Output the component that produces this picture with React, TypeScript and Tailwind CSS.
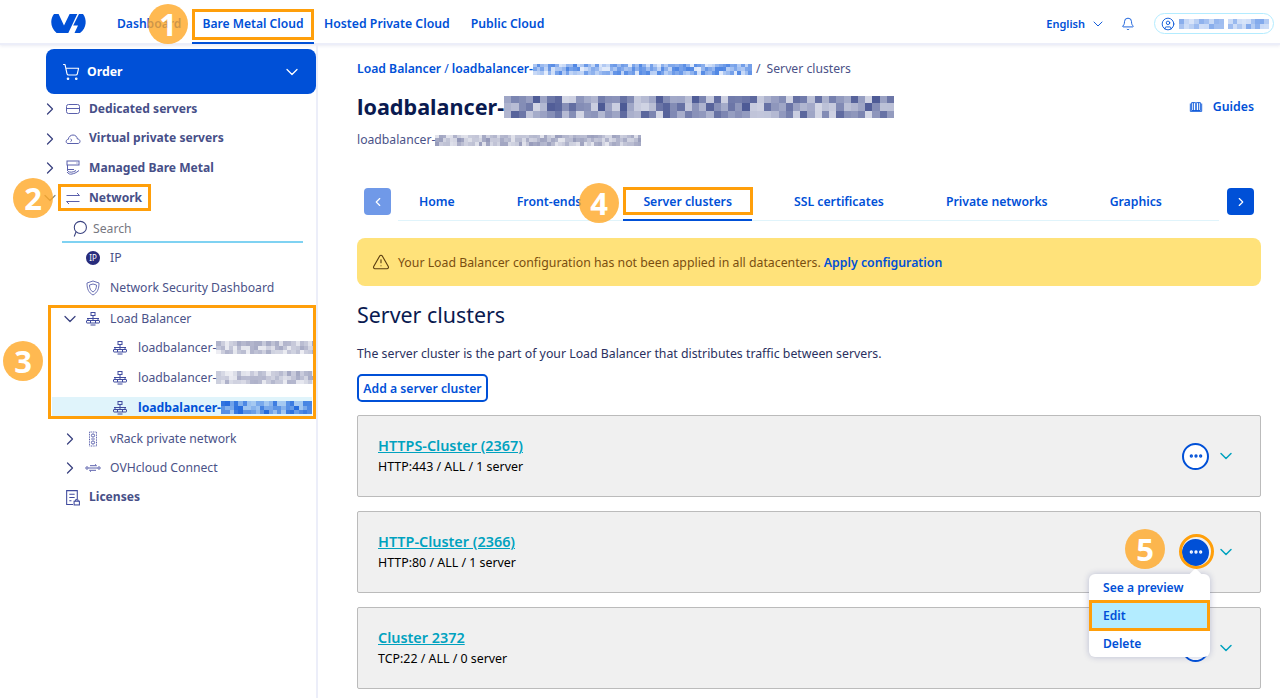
import React from "react";
import { ChevronDown, ChevronLeft, ChevronRight, Bell, ShoppingCart, TriangleAlert, Ellipsis, CircleUser } from "lucide-react";

function Pixels({ w, h, rows, seed, rgb, min = 0.2, max = 0.8 }: { w: number; h: number; rows: number; seed: number; rgb: string; min?: number; max?: number }) {
  const cell = h / rows;
  const cols = Math.ceil(w / cell);
  let s = seed;
  const next = () => {
    s = (s * 16807) % 2147483647;
    return (s % 1000) / 1000;
  };
  const cells: number[] = [];
  for (let i = 0; i < rows * cols; i++) cells.push(min + (max - min) * next());
  return (
    <span className="inline-grid shrink-0 overflow-hidden align-middle blur-[0.4px]" style={{ width: w, height: h, gridTemplateColumns: `repeat(${cols}, 1fr)`, gridTemplateRows: `repeat(${rows}, 1fr)` }}>
      {cells.map((o, i) => (
        <span key={i} style={{ backgroundColor: `rgba(${rgb},${o})` }} />
      ))}
    </span>
  );
}

function Logo() {
  return (
    <svg width="36" height="21" viewBox="0 0 36 21" fill="#0050d7" className="shrink-0">
      <path d="M3 1C-1 6-1 14.5 5.6 20L17.3 20 26.3 1 18.6 1 13 12.5 7.6 1Z" />
      <path d="M32 1C36 6 36 15 29 20L23.5 20 27 12.5 22.2 12.5 28 1Z" />
    </svg>
  );
}

function Sv({ children, s = 16, c = "#5a60ac" }: { children: React.ReactNode; s?: number; c?: string }) {
  return (
    <svg width={s} height={s} viewBox="0 0 16 16" fill="none" stroke={c} strokeWidth="1" className="shrink-0">
      {children}
    </svg>
  );
}

const LbIcon = () => (
  <Sv c="#3f4a9e">
    <rect x="6" y="1.5" width="4" height="3" />
    <path d="M8 4.5V7M2 7.5h12M3 7.5V9M8 7.5V9M13 7.5V9" />
    <rect x="1.5" y="9.5" width="13" height="2.5" rx="0.5" />
    <path d="M5.5 9.5v2.5M10.5 9.5v2.5M5.5 14h5" />
  </Sv>
);
const ServerIcon = () => (
  <Sv>
    <rect x="1.5" y="3.5" width="13" height="9" rx="2" />
    <path d="M1.5 7.5h13" />
  </Sv>
);
const CloudIcon = () => (
  <Sv>
    <path d="M4 12.5H3C1.5 12.5 1 11 1.2 10 1.5 8.8 2.5 8.3 3.3 8.4 3.6 5.5 6 4 8 4c2.4 0 4 1.6 4.4 4 1.5 0 2.6 1 2.6 2.4 0 1.2-1 2.1-2 2.1H4Z" />
    <path d="M5.5 8l1.5 1.3-1.5 1.3" />
  </Sv>
);
const MetalIcon = () => (
  <Sv>
    <rect x="2" y="1" width="12" height="4" />
    <path d="M2.5 5v6M2.5 9.5H9M11.5 3h1" />
    <path d="M2 12c1.5 2 3 2.5 5 2s4-1 7-3.5M3 11.5c2 1 5 1 8-1" />
  </Sv>
);
const NetIcon = () => (
  <Sv>
    <path d="M1.5 5.5h13M12 3l2.5 2.5M1.5 11.5h13M4 14l-2.5-2.5" />
  </Sv>
);
const RackIcon = () => (
  <Sv c="#5a60ac">
    <rect x="4.5" y="1" width="7" height="14" strokeDasharray="1 0.7" />
    <circle cx="8" cy="4.5" r="1.6" />
    <circle cx="8" cy="11.5" r="1.6" />
    <path d="M6.2 8h3.6" />
  </Sv>
);
const ConnectIcon = () => (
  <Sv>
    <circle cx="2" cy="8" r="1.2" />
    <circle cx="14" cy="8" r="1.2" />
    <path d="M3.5 8h9M5 5.7h6.5M10 4.3l1.5 1.4M11 10.3H4.5M6 11.7l-1.5-1.4" />
  </Sv>
);
const LicenseIcon = () => (
  <Sv s={17} c="#3f4a9e">
    <path d="M8.5 14.5H2.5v-13h10v8" />
    <path d="M5 5h5M5 8h5M5 11h2" />
    <rect x="9.5" y="11.5" width="5" height="3.5" />
    <path d="M10.5 11.5c0-2 3-2 3 0" />
  </Sv>
);
const SearchIcon = () => (
  <Sv s={17} c="#3a4280">
    <circle cx="8.8" cy="7" r="5.7" />
    <path d="M4.8 11 L3 15.5" />
  </Sv>
);
const ShieldIcon = () => (
  <Sv c="#6a70b4">
    <path d="M8 1 L14 3 C14 9 12.5 12.5 8 15 C3.5 12.5 2 9 2 3 Z" />
    <path d="M8 4 L11.5 5 C11.5 8.5 10.5 10.5 8 12 C5.5 10.5 4.5 8.5 4.5 5 Z" />
  </Sv>
);
const GuideIcon = () => (
  <Sv s={14} c="#0050d7">
    <path d="M1.5 4v9h13V4M3 3h4.2c.5 0 .8.3.8 1v8H3ZM13 3H8.8c-.5 0-.8.3-.8 1v8h5ZM5 3v9M11 3v9" />
  </Sv>
);
const IpIcon = () => (
  <span className="flex h-[14px] w-[14px] shrink-0 items-center justify-center rounded-full bg-[#282c7c] text-[8px] leading-none text-white">IP</span>
);

function Chev({ open = false, c = "#3a4280" }: { open?: boolean; c?: string }) {
  const Ico = open ? ChevronDown : ChevronRight;
  return (
    <span className="flex w-[14px] shrink-0 justify-center overflow-visible">
      <Ico size={20} strokeWidth={1.5} color={c} className="shrink-0" />
    </span>
  );
}

function TopRow({ label, icon, open = false }: { label: string; icon: React.ReactNode; open?: boolean }) {
  return (
    <div className="flex h-[29.7px] items-center pl-[43px]">
      <Chev open={open} c={open ? "#8a8a7a" : "#3a4280"} />
      <span className="ml-[7px] flex w-[17px] justify-center">{icon}</span>
      <span className="ml-[8px] text-[12.1px] font-bold text-[#474f88]">{label}</span>
    </div>
  );
}

function SubRow({ label, icon, chevron, open = false, h = "h-[30px]" }: { label: string; icon: React.ReactNode; chevron?: boolean; open?: boolean; h?: string }) {
  return (
    <div className={`flex items-center pl-[63px] ${h}`}>
      {chevron ? <Chev open={open} /> : <span className="w-[14px]" />}
      <span className="ml-[8px] flex w-[16px] justify-center">{icon}</span>
      <span className="ml-[9px] text-[12.2px] text-[#4a5288]">{label}</span>
    </div>
  );
}

function LbChild({ seed, active = false }: { seed: number; active?: boolean }) {
  return (
    <div className={`flex items-center overflow-hidden ${active ? "ml-[52px] mt-[4px] h-[22px] w-[260px] bg-[#e0f4fb] pl-[60px]" : "h-[30px] pl-[112px]"}`}>
      <LbIcon />
      <span className={`ml-[10px] whitespace-nowrap text-[12.2px] ${active ? "font-bold text-[#0050d7]" : "text-[#4a5288]"}`}>loadbalancer-</span>
      <Pixels w={active ? 95 : 100} h={13} rows={3} seed={seed} rgb={active ? "0,80,215" : "74,82,136"} min={active ? 0.25 : 0.1} max={active ? 0.85 : 0.5} />
    </div>
  );
}

function Sidebar() {
  return (
    <aside className="flex h-full w-[318px] shrink-0 flex-col border-r-2 border-[#eceef9] pt-[4px]">
      <div className="ml-[46px] flex h-[45px] w-[270px] shrink-0 items-center rounded-lg bg-[#0050d7] pl-[16px] pr-[14px] text-white">
        <ShoppingCart size={18} strokeWidth={1.5} />
        <span className="ml-[7px] pt-[2px] text-[12.3px] font-bold">Order</span>
        <ChevronDown size={20} strokeWidth={1.5} className="ml-auto" />
      </div>
      <div>
        <TopRow label="Dedicated servers" icon={<ServerIcon />} />
        <TopRow label="Virtual private servers" icon={<CloudIcon />} />
        <TopRow label="Managed Bare Metal" icon={<MetalIcon />} />
        <TopRow label="Network" icon={<NetIcon />} open />
        <div className="ml-[62px] flex h-[30px] w-[241px] items-center gap-[5px] border-b-2 border-[#7fd2f2] pl-[9px] pt-[4px] text-[12.2px] text-[#77777f]">
          <SearchIcon />
          <span>Search</span>
        </div>
        <SubRow label="IP" icon={<IpIcon />} />
        <SubRow label="Network Security Dashboard" icon={<ShieldIcon />} />
        <div className="pt-[3px]">
          <SubRow label="Load Balancer" icon={<LbIcon />} chevron open h="h-[27px]" />
        </div>
        <LbChild seed={1234} />
        <LbChild seed={987} />
        <LbChild seed={555} active />
        <div className="mt-[5px]">
          <SubRow label="vRack private network" icon={<RackIcon />} chevron />
          <SubRow label="OVHcloud Connect" icon={<ConnectIcon />} chevron h="h-[29px]" />
        </div>
        <div className="flex h-[29px] items-center pl-[64px]">
          <span className="flex w-[17px] justify-center"><LicenseIcon /></span>
          <span className="ml-[8px] text-[12.1px] font-bold text-[#474f88]">Licenses</span>
        </div>
      </div>
    </aside>
  );
}

function Header() {
  return (
    <header className="flex h-[45px] shrink-0 items-center border-b-2 border-[#eceef9] pl-[51px] pr-[6px] pt-[4px] shadow-[0_1px_3px_rgba(80,90,160,0.12)]">
      <Logo />
      <nav className="ml-[20px] flex h-full items-center text-[12.1px] font-semibold text-[#0050d7]">
        <a className="flex w-[85px] items-center pl-[10px] pt-[2px]">Dashboard</a>
        <a className="flex h-[41px] w-[122px] items-center justify-center border-b-2 border-[#0050d7] pt-[4px]">Bare Metal Cloud</a>
        <a className="flex items-center pl-[10px] pr-[21px] pt-[2px] text-[12.25px]">Hosted Private Cloud</a>
        <a className="flex items-center pt-[2px] text-[12.25px]">Public Cloud</a>
      </nav>
      <div className="ml-auto flex items-center text-[#0050d7]">
        <span className="pt-[2px] text-[11px] font-semibold">English</span>
        <ChevronDown size={16} strokeWidth={1.4} className="ml-[5px]" />
        <Bell size={14} strokeWidth={1.5} className="ml-[15px]" />
        <div className="ml-[19px] flex h-[21px] w-[120px] items-center gap-[4px] rounded-full border border-[#b3ecff] pl-[6px]">
          <CircleUser size={14} strokeWidth={1.5} className="shrink-0" />
          <Pixels w={45} h={10} rows={2} seed={42} rgb="0,80,215" min={0.15} max={0.5} />
          <Pixels w={41} h={10} rows={2} seed={77} rgb="0,80,215" min={0.15} max={0.5} />
        </div>
      </div>
    </header>
  );
}

function Tabs() {
  const tabs = ["Home", "Front-ends", "Server clusters", "SSL certificates", "Private networks", "Graphics"];
  return (
    <div className="ml-[7px] mt-[39px] flex h-[33px] w-[890px] items-start">
      <button className="flex h-[27px] w-[27px] shrink-0 items-center justify-center rounded-[4px] bg-[#7099e8] text-white">
        <ChevronLeft size={14} strokeWidth={2} />
      </button>
      <div className="ml-[7px] flex h-[33px] w-[821px] gap-[22px] border-b border-[#e0f4fb] pl-px">
        {tabs.map((t) => (
          <div key={t} className={`flex h-[33px] items-center whitespace-nowrap border-b-2 px-[20px] pb-[3px] text-[12.25px] font-semibold text-[#0050d7] ${t === "Server clusters" ? "border-[#0050d7]" : "border-transparent"}`}>
            {t}
          </div>
        ))}
      </div>
      <button className="ml-[8px] flex h-[27px] w-[27px] shrink-0 items-center justify-center rounded-[4px] bg-[#0050d7] text-white">
        <ChevronRight size={14} strokeWidth={2} />
      </button>
    </div>
  );
}

function Card({ title, sub, active = false }: { title: string; sub: string; active?: boolean }) {
  return (
    <div className="flex h-[82px] items-center rounded-[2px] border border-[#bbbbbb] bg-[#f0f0f0] pl-[20px] pr-[24px]">
      <div className="flex-1 pt-[1px]">
        <a className="block text-[14.4px] font-semibold leading-[20px] text-[#00a2bf] underline">{title}</a>
        <p className="mt-[1px] text-[12.4px] leading-[20px] text-black">{sub}</p>
      </div>
      <button className={`flex h-[27px] w-[27px] items-center justify-center rounded-full border-2 border-[#0050d7] ${active ? "bg-[#0050d7] text-white" : "bg-white text-[#0050d7]"}`}>
        <Ellipsis size={16} strokeWidth={3} />
      </button>
      <ChevronDown size={20} strokeWidth={1.8} color="#00a2bf" className="ml-[7px]" />
    </div>
  );
}

function Main() {
  return (
    <main className="min-w-0 flex-1 pl-[39px] pr-[19px] pt-[15px]">
      <div className="flex h-[18px] items-center text-[12.2px] text-[#4a5288]">
        <span className="font-semibold text-[#0050d7]">Load Balancer</span>
        <span className="ml-[3px] text-[#0050d7]">/</span>
        <span className="ml-[3px] font-semibold text-[#0050d7]">loadbalancer-</span>
        <Pixels w={219} h={11} rows={3} seed={2024} rgb="0,80,215" min={0.1} max={0.7} />
        <span className="ml-[4px]">/</span>
        <span className="ml-[6px]">Server clusters</span>
      </div>
      <div className="mt-[14px] flex h-[30px] items-center justify-between">
        <div className="flex items-center">
          <span className="text-[21.6px] font-bold text-[#0a1a50]">loadbalancer-</span>
          <Pixels w={390} h={22} rows={3} seed={314} rgb="45,60,130" min={0.2} max={0.85} />
        </div>
        <div className="mr-[7px] flex items-center gap-[10px] text-[12.3px] font-semibold text-[#0050d7]">
          <GuideIcon />
          Guides
        </div>
      </div>
      <div className="mt-[9px] flex h-[18px] items-center text-[12.2px] text-[#4a5288]">
        loadbalancer-
        <Pixels w={206} h={11} rows={3} seed={88} rgb="74,82,136" min={0.15} max={0.6} />
      </div>
      <Tabs />
      <div className="mt-[17px] flex h-[48px] items-center rounded-lg bg-[#ffe27a] pl-[15px] text-[12.3px] text-[#7a4e10]">
        <TriangleAlert size={18} strokeWidth={1.5} color="#5a3d10" />
        <span className="ml-[8px] pt-[2px]">Your Load Balancer configuration has not been applied in all datacenters.</span>
        <span className="ml-[3px] pt-[2px] font-semibold text-[#0050d7]">Apply configuration</span>
      </div>
      <h2 className="mt-[13px] text-[21.4px] font-normal leading-[32px] text-[#0a1a50]">Server clusters</h2>
      <p className="mt-[14px] text-[12.3px] leading-[18px] text-[#2a3060]">The server cluster is the part of your Load Balancer that distributes traffic between servers.</p>
      <button className="mt-[11px] flex h-[28px] w-[131px] items-center justify-center rounded-[5px] border-2 border-[#0050d7] pt-[2px] text-[12.2px] font-semibold text-[#0050d7]">Add a server cluster</button>
      <div className="mt-[13px] flex flex-col gap-[14px]">
        <Card title="HTTPS-Cluster (2367)" sub="HTTP:443 / ALL / 1 server" />
        <Card title="HTTP-Cluster (2366)" sub="HTTP:80 / ALL / 1 server" active />
        <Card title="Cluster 2372" sub="TCP:22 / ALL / 0 server" />
      </div>
    </main>
  );
}

function Badge({ n, className }: { n: number; className: string }) {
  return (
    <div className={`absolute flex h-[40px] w-[40px] items-center justify-center rounded-full bg-[#ffa726]/80 text-[31px] font-bold leading-none text-white ${className}`}>{n}</div>
  );
}

function Menu() {
  return (
    <div className="absolute left-[1089px] top-[574px] w-[121px] rounded-md bg-white text-[12.1px] font-semibold text-[#0050d7] shadow-[0_0_6px_rgba(60,70,140,0.3)]">
      <div className="absolute -top-[4px] left-[102px] h-[9px] w-[9px] rotate-45 bg-white" />
      <div className="relative flex h-[27px] items-center pl-[14px] pt-[2px]">See a preview</div>
      <div className="relative flex h-[29px] items-center bg-[#b3ecff] pl-[14px] pt-[2px]">Edit</div>
      <div className="relative flex h-[27px] items-center pl-[14px] pt-[2px]">Delete</div>
    </div>
  );
}

const boxCls = "absolute border-[3px] border-[#ff9f0a]";

export default function App() {
  return (
    <div className="relative flex h-[698px] w-[1280px] flex-col overflow-hidden bg-white font-['Noto_Sans',sans-serif]">
      <Header />
      <div className="flex min-h-0 flex-1">
        <Sidebar />
        <Main />
      </div>
      <Menu />
      <div className={`${boxCls} left-[192px] top-[9px] h-[31px] w-[122px]`} />
      <div className={`${boxCls} left-[58px] top-[184px] h-[27px] w-[93px]`} />
      <div className={`${boxCls} left-[48px] top-[305px] h-[114px] w-[268px]`} />
      <div className={`${boxCls} left-[623px] top-[187px] h-[28px] w-[130px]`} />
      <div className={`${boxCls} left-[1089px] top-[600px] h-[31px] w-[121px]`} />
      <div className="absolute left-[1179px] top-[534px] h-[35px] w-[35px] rounded-full border-[3px] border-[#ff9f0a]" />
      <Badge n={1} className="left-[148px] top-[4px]" />
      <Badge n={2} className="left-[13px] top-[178px]" />
      <Badge n={3} className="left-[3px] top-[341px]" />
      <Badge n={4} className="left-[579px] top-[183px]" />
      <Badge n={5} className="left-[1125px] top-[529px]" />
    </div>
  );
}
